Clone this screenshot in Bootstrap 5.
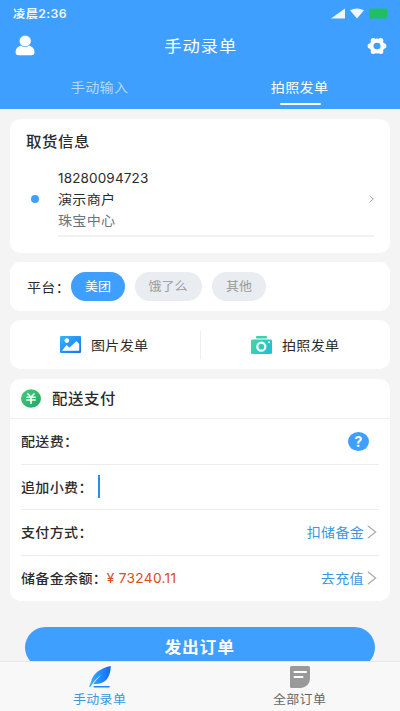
<!DOCTYPE html>
<html lang="zh-CN">
<head>
<meta charset="utf-8">
<meta name="viewport" content="width=device-width, initial-scale=1">
<title>手动录单</title>
<link href="https://cdn.jsdelivr.net/npm/bootstrap@5.3.0/dist/css/bootstrap.min.css" rel="stylesheet">
<style>
:root { --blue: #3f9fff; }
body { font-family: Inter, "Noto Sans CJK SC", sans-serif; background: #f4f4f4; color: #2b2b2b; font-size: 13px; line-height: 20px; }
svg { display: block; flex: none; }
.screen { width: 400px; height: 711px; }
.top { height: 109px; background: var(--blue); color: #fff; }
.status { height: 27px; padding: 0 12px 0 13px; font: 600 11.3px/26px Inter, "Noto Sans CJK SC", sans-serif; color: #eef6ff; }
.status .wide { letter-spacing: .4px; }
.bar { height: 37px; padding: 0 13px 0 15px; }
.tabs { height: 45px; }
.tab { padding-top: 13px; color: #b3d9ff; }
.tab.active { color: #fff; }
.tab.active::after { content: ""; width: 41px; height: 2px; margin-top: 6px; border-radius: 1px; background: #fff; }
/* wide lettering, growing from the left, the middle or the right */
.wide { display: inline-block; white-space: nowrap; transform: scaleX(1.08); transform-origin: 0 50%; letter-spacing: .3px; }
.wide.mid { transform-origin: 50% 50%; }
.wide.end { transform-origin: 100% 50%; }
.wide.t-head { font-size: 16px; letter-spacing: .9px; }
.wide.t-title { font-size: 14.3px; font-weight: 500; letter-spacing: .5px; }
.wide.t-small { font-size: 12px; }
.wide.t-send { font-size: 15.5px; font-weight: 700; letter-spacing: .8px; }
.content { padding: 10px 10px 0; }
.panel { background: #fff; border: 0; border-radius: 10px; }
.pickup { height: 134px; padding: 13px 16px 0; }
.pickup-row { margin-top: 14px; height: 65px; }
.dot { width: 8px; height: 8px; border-radius: 50%; background: var(--blue); margin: 0 19px 0 5px; flex: none; }
.pickup-info { height: 76px; padding-top: 3px; border-bottom: 2px solid #f2f2f2; line-height: 21px; }
.phone { font-size: 13.5px; letter-spacing: .15px; }
.platform { height: 49px; margin-top: 9px; padding-left: 17px; gap: 4px; }
.chips { gap: 10px; }
.chip { height: 29px; width: 54px; border-radius: 15px; background: #e9ecf1; color: #999; text-align: center; }
.chip .wide { font-size: 12px; line-height: 30px; letter-spacing: 0; }
.chip.active { background: var(--blue); color: #fff; }
.chip-l { width: 67px; }
.modes { height: 49px; margin-top: 9px; }
.mode { gap: 10px; padding-right: 5px; }
.split { width: 1px; height: 28px; background: #eee; }
.pay { height: 222px; margin-top: 10px; }
.pay-head { height: 40px; padding-left: 11px; border-bottom: 1.5px solid #f1f1f1; gap: 11px; }
.pay-row { height: 45.5px; margin: 0 11px; border-bottom: 1px solid #ececec; font-weight: 500; }
.pay-row:last-child { border: 0; }
.link { color: #3a97de; font-weight: 400; }
.caret { width: 2px; height: 23px; background: #2b8fe8; margin-left: 10px; }
.money { color: #dc4a17; font-weight: 400; font-size: 13.7px; letter-spacing: .3px; margin-left: 6px; }
.help { width: 21px; height: 19px; border-radius: 50%; background: var(--blue); color: #fff; font: 700 14px/19px Inter, sans-serif; text-align: center; margin-right: 10px; }
.next { margin: 0 2px 0 3px; }
.send-area { height: 60px; padding: 26px 15px 0; overflow: hidden; }
.send { height: 41px; border: 0; border-radius: 21px; background: var(--blue); color: #fff; padding: 0; line-height: 40px; }
.foot { height: 50px; background: #f8f8f8; border-top: 1px solid #e9e9e9; }
.foot-item { padding-top: 4px; color: #666; gap: 2px; }
.foot-item.active { color: #3a97de; }
</style>
<script src="https://cdn.jsdelivr.net/npm/bootstrap@5.3.0/dist/js/bootstrap.bundle.min.js"></script>
</head>
<body>
<div class="screen d-flex flex-column overflow-hidden">
  <header class="top flex-shrink-0">
    <div class="status d-flex align-items-center justify-content-between">
      <span class="wide">凌晨2:36</span>
      <svg width="57" height="11" viewBox="0 0 57 11"><path d="M0 10.5L14 .5v10z" fill="#eef6ff"/><path d="M19 2.2Q26-1.4 33 2.2L26 10.5z" fill="#eef6ff"/><rect x="38" y=".5" width="18.500" height="10" rx="1.500" fill="#20bf63"/></svg>
    </div>
    <div class="bar d-flex align-items-center justify-content-between">
      <svg width="20" height="21" viewBox="0 0 20 21"><path d="M.6 17.500C.6 13.500 3 11.500 6 10.600Q10 13.200 14 10.600C17 11.500 19.500 13.500 19.500 17.500Q19.500 20.300 16.500 20.300H3.600Q.6 20.300.6 17.500z" fill="#fff"/><ellipse cx="10.200" cy="6" rx="6" ry="5.700" fill="#fff" stroke="#3f9fff" stroke-width=".6"/></svg>
      <span class="wide mid t-head">手动录单</span>
      <svg width="20" height="18" viewBox="0 0 20 18"><g fill="#fff"><circle cx="10" cy="9" r="7.500"/><circle cx="3.300" cy="9" r="2.700"/><circle cx="16.700" cy="9" r="2.700"/><circle cx="6.200" cy="3.400" r="2.500"/><circle cx="13.800" cy="3.400" r="2.500"/><circle cx="6.200" cy="14.600" r="2.500"/><circle cx="13.800" cy="14.600" r="2.500"/></g><ellipse cx="10" cy="9" rx="3.500" ry="3.200" fill="#3f9fff"/></svg>
    </div>
    <div class="tabs row g-0">
      <div class="tab col d-flex flex-column align-items-center"><span class="wide mid">手动输入</span></div>
      <div class="tab active col d-flex flex-column align-items-center"><span class="wide mid">拍照发单</span></div>
    </div>
  </header>

  <main class="content flex-shrink-0">
    <section class="panel pickup">
      <div><span class="wide t-title">取货信息</span></div>
      <div class="pickup-row d-flex align-items-center">
        <span class="dot"></span>
        <div class="pickup-info flex-grow-1 d-flex align-items-center">
          <div class="d-flex flex-column flex-grow-1">
            <span class="phone">18280094723</span>
            <span class="wide">演示商户</span>
            <span class="wide text-secondary">珠宝中心</span>
          </div>
          <svg width="5" height="8" viewBox="0 0 5 8"><path d="M.5.8L4.300 4 .5 7.200" fill="none" stroke="#aaa"/></svg>
        </div>
      </div>
    </section>

    <section class="panel platform d-flex align-items-center">
      <span class="wide">平台：</span>
      <div class="chips d-flex">
        <div class="chip active"><span class="wide mid">美团</span></div>
        <div class="chip chip-l"><span class="wide mid">饿了么</span></div>
        <div class="chip"><span class="wide mid">其他</span></div>
      </div>
    </section>

    <section class="panel modes d-flex align-items-center">
      <div class="mode col d-flex align-items-center justify-content-center">
        <svg width="21" height="17" viewBox="0 0 21 17"><defs><linearGradient id="pic" x2="1" y2="1"><stop stop-color="#35b6ff"/><stop offset="1" stop-color="#1673f5"/></linearGradient></defs><rect width="21" height="17" rx="1" fill="url(#pic)"/><circle cx="6.800" cy="4.600" r="2.300" fill="#fff"/><path d="M2 14.800L6.500 9l3 2.600L16.500 5l2.700 3v6.800z" fill="#fff"/></svg>
        <span class="wide">图片发单</span>
      </div>
      <div class="split"></div>
      <div class="mode col d-flex align-items-center justify-content-center">
        <svg width="21" height="18" viewBox="0 0 21 18"><defs><linearGradient id="cam" x2="1" y2=".4"><stop stop-color="#3ed9a4"/><stop offset="1" stop-color="#20c3cf"/></linearGradient></defs><rect x="5" width="11" height="2.500" rx="1" fill="#36d3ae"/><rect y="3.500" width="21" height="14.500" rx="1.500" fill="url(#cam)"/><circle cx="10.300" cy="10.700" r="4" fill="none" stroke="#fff" stroke-width="2.300"/><circle cx="18" cy="6.300" r="1" fill="#fff"/></svg>
        <span class="wide">拍照发单</span>
      </div>
    </section>

    <section class="panel pay">
      <div class="pay-head d-flex align-items-center">
        <svg width="20" height="19" viewBox="0 0 20 19"><defs><linearGradient id="yen" x2="1" y2="1"><stop stop-color="#42cf7c"/><stop offset="1" stop-color="#23a462"/></linearGradient></defs><ellipse cx="10" cy="9.500" rx="10" ry="9.300" fill="url(#yen)"/><path d="M6.500 4.500L10 8l3.500-3.500M5.300 8.200h9.400M5.300 11h9.400M10 8v7" fill="none" stroke="#fff" stroke-width="1.500"/></svg>
        <span class="wide t-title">配送支付</span>
      </div>
      <div class="pay-row d-flex align-items-center justify-content-between"><span class="wide">配送费：</span><span class="help">?</span></div>
      <div class="pay-row d-flex align-items-center"><span class="wide">追加小费：</span><span class="caret"></span></div>
      <div class="pay-row d-flex align-items-center"><span class="wide">支付方式：</span>
        <span class="wide end link ms-auto">扣储备金</span>
        <svg class="next" width="10" height="14" viewBox="0 0 10 14"><path d="M.8.8L8.600 7 .8 13.200" fill="none" stroke="#aaa" stroke-width="1.200"/></svg></div>
      <div class="pay-row d-flex align-items-center"><span class="wide">储备金余额：</span><span class="money">¥ 73240.11</span>
        <span class="wide end link ms-auto">去充值</span>
        <svg class="next" width="10" height="14" viewBox="0 0 10 14"><path d="M.8.8L8.600 7 .8 13.200" fill="none" stroke="#aaa" stroke-width="1.200"/></svg></div>
    </section>

    <div class="send-area"><button class="send btn w-100 d-block"><span class="wide mid t-send">发出订单</span></button></div>
  </main>

  <footer class="foot row g-0 flex-shrink-0">
    <div class="foot-item active col d-flex flex-column align-items-center">
      <svg width="22" height="22" viewBox="0 0 22 22"><defs><linearGradient id="leaf" x2="1" y2="0"><stop stop-color="#3bb2fb"/><stop offset="1" stop-color="#1269f3"/></linearGradient></defs><path d="M21.800 0C10 2.500 3.500 8.500 2.200 15.500L0 20.800l1.300.1Q6 13 12.500 8.700 7 13.700 4.300 18C14 18.800 21.500 14 21.800 0z" fill="url(#leaf)"/><path d="M5.200 20.800H20" stroke="#2186f8" stroke-width="1.600" stroke-linecap="round"/></svg>
      <span class="wide mid t-small">手动录单</span>
    </div>
    <div class="foot-item col d-flex flex-column align-items-center">
      <svg width="20" height="22" viewBox="0 0 20 22"><path d="M1.500 0h17Q20 0 20 1.500V13Q19 21 11 22H1.500Q0 22 0 20.500v-19Q0 0 1.500 0z" fill="#999"/><path d="M4.500 6h11.500M4.500 11h8" stroke="#fff" stroke-width="2" stroke-linecap="round"/></svg>
      <span class="wide mid t-small">全部订单</span>
    </div>
  </footer>
</div>
</body>
</html>
